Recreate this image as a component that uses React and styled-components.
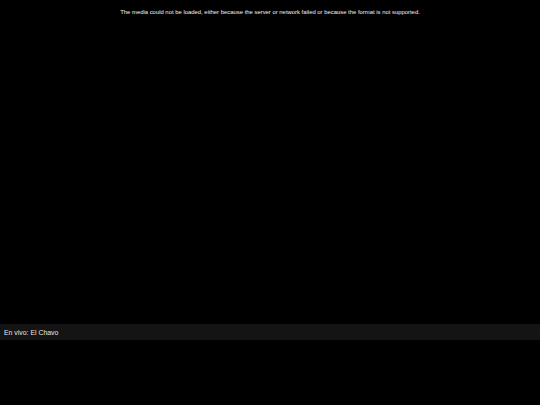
import React from 'react';
import styled, { createGlobalStyle } from 'styled-components';

const Global = createGlobalStyle`
  html, body {
    margin: 0;
    padding: 0;
    background: #000;
    height: 100%;
  }
  #root {
    min-height: 100%;
  }
`;

const Page = styled.div`
  width: 540px;
  height: 405px;
  background: #000;
  display: flex;
  flex-direction: column;
  font-family: "Liberation Sans", Arial, sans-serif;
`;

const Player = styled.div`
  height: 324px;
  display: flex;
  justify-content: center;
  padding-top: 8px;
  box-sizing: border-box;
`;

const ErrorText = styled.div`
  color: #f2f2f2;
  font-size: 5.9px;
  line-height: 8px;
  height: 8px;
`;

const Caption = styled.div`
  height: 16px;
  background: #141414;
  display: flex;
  align-items: center;
  padding-left: 4px;
  color: #e6e6e6;
  font-size: 6.9px;
`;

export default function App() {
  return (
    <>
      <Global />
      <Page>
        <Player>
          <ErrorText>
            The media could not be loaded, either because the server or network failed or because the format is not supported.
          </ErrorText>
        </Player>
        <Caption>En vivo: El Chavo</Caption>
      </Page>
    </>
  );
}
